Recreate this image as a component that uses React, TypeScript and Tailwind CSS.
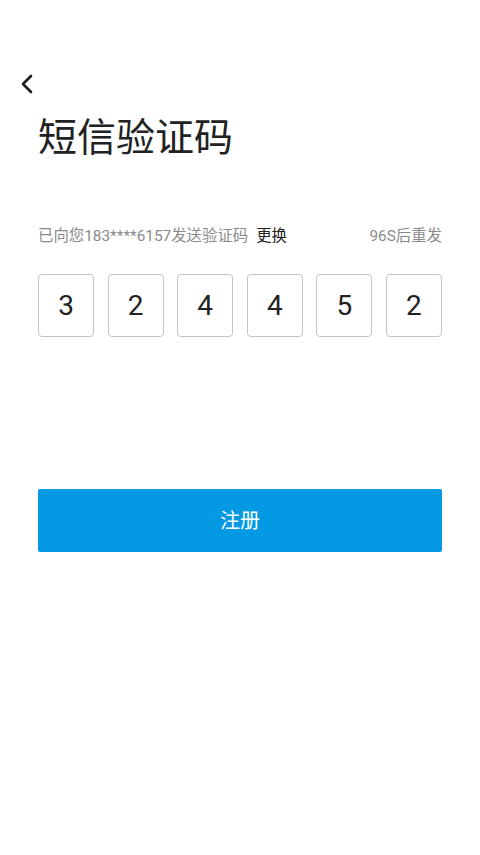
export default function App() {
  const code = ["3", "2", "4", "4", "5", "2"]
  return (
    <div
      className="min-h-[855px] w-[480px] bg-white"
      style={{ fontFamily: 'Roboto, "Noto Sans CJK SC", sans-serif' }}
    >
      <div className="h-[72px]" />
      <button className="ml-[18px] flex h-[24px] w-[18px] items-center justify-center">
        <svg width="14" height="20" viewBox="0 0 14 20" fill="none">
          <polyline
            points="11,2 3,10 11,18"
            stroke="#1f1f1f"
            strokeWidth="2.6"
            strokeLinecap="round"
            strokeLinejoin="round"
          />
        </svg>
      </button>
      <div className="px-[38px]">
        <h1 className="mt-[18px] text-[39px] leading-[48px] font-normal text-[#222]">短信验证码</h1>
        <div className="mt-[64px] flex items-center justify-between text-[15.4px] leading-[20px]">
          <p className="text-[#8a8a8a]">
            已向您183****6157发送验证码
            <span className="ml-[8px] text-[#222]">更换</span>
          </p>
          <span className="text-[#8a8a8a]">96S后重发</span>
        </div>
        <div className="mt-[28px] flex justify-between">
          {code.map((d, i) => (
            <div
              key={i}
              className="flex h-[63px] w-[56px] items-center justify-center rounded-[4px] border border-[#c4c4c4] text-[28px] text-[#222]"
            >
              {d}
            </div>
          ))}
        </div>
        <button className="mt-[152px] flex h-[63px] w-full items-center justify-center rounded-[2px] bg-[#0399e3] text-[20px] text-white">
          注册
        </button>
      </div>
    </div>
  )
}
